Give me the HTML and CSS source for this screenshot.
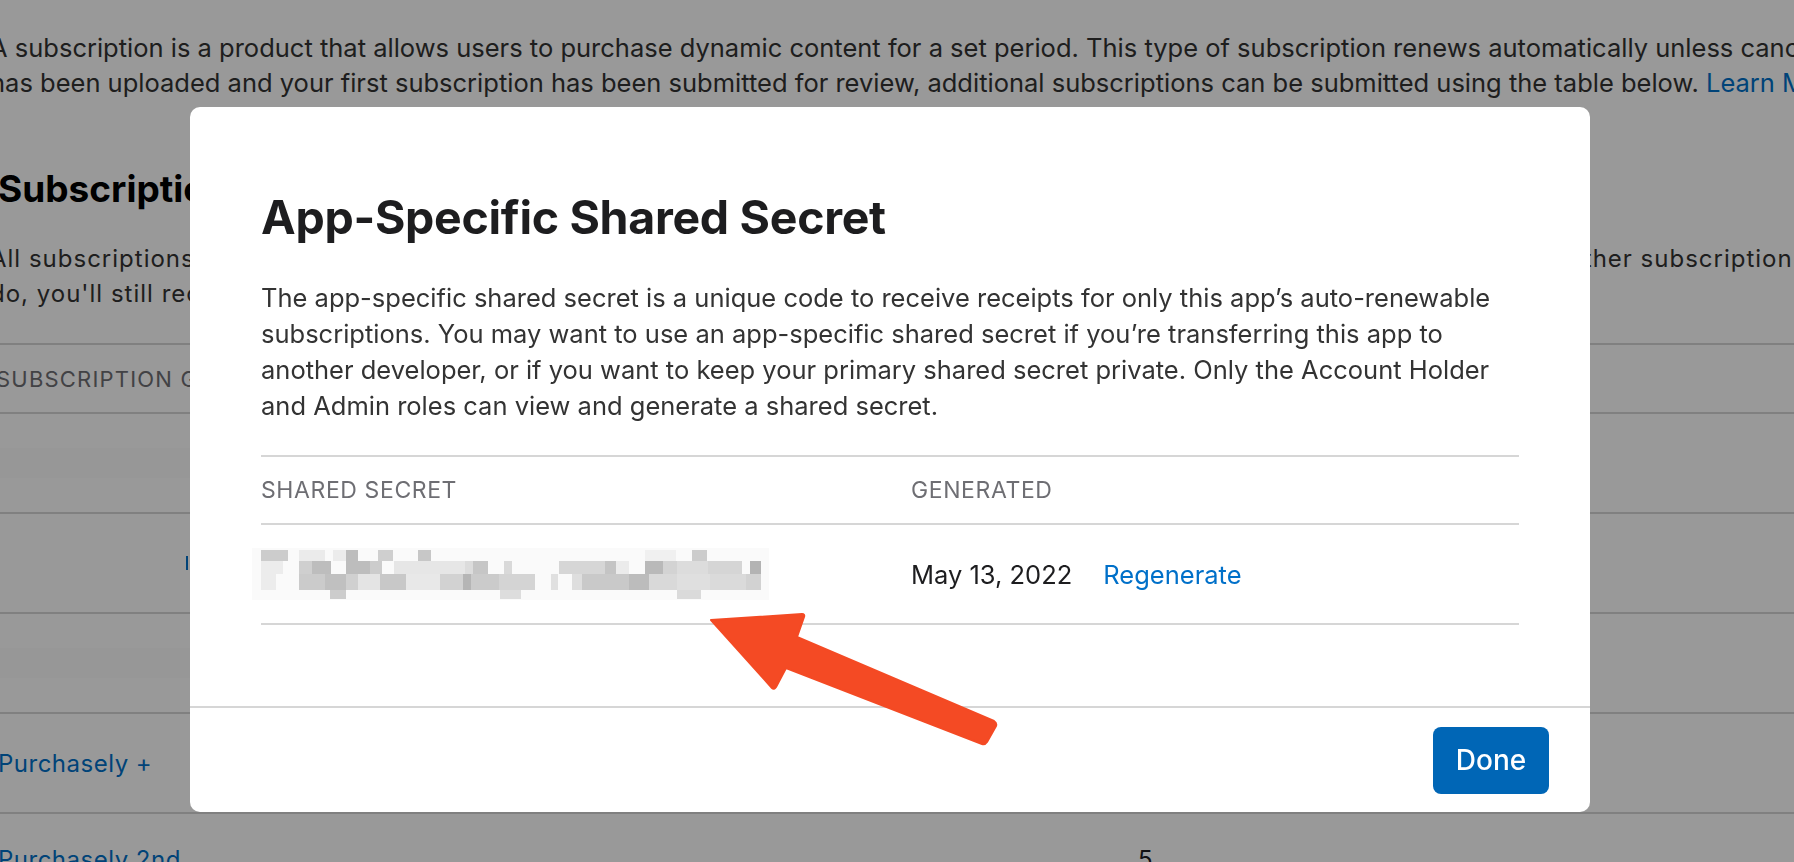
FILE: index.html
```html
<!DOCTYPE html>
<html lang="en">
<head>
<meta charset="utf-8">
<title>App-Specific Shared Secret</title>
<link rel="stylesheet" href="styles.css">
</head>
<body>
<div class="page">
  <p class="intro">A subscription is a product that allows users to purchase dynamic content for a set period. This type of subscription renews automatically unless cancelled by the user.<br>has been uploaded and your first subscription has been submitted for review, additional subscriptions can be submitted using the table below. <a class="bg-link">Learn More</a></p>
  <h2 class="bg-title">Subscription Groups</h2>
  <p class="bg-text">All subscriptions must be part of a group. Users can subscribe to only one subscription per group at any time, and can also buy other subscription groups as well.<br>do, you'll still receive a single notification for each of the subscriptions they have.</p>
  <div class="bg-table">
    <div class="bg-row bg-head"><span class="bg-cell">SUBSCRIPTION GROUP REFERENCE NAME</span></div>
    <div class="bg-row"><span class="bg-cell bg-faint">&nbsp;</span></div>
    <div class="bg-row"><span class="bg-cell bg-blue-frag">&nbsp;</span></div>
    <div class="bg-row"><span class="bg-cell bg-faint">&nbsp;</span></div>
    <div class="bg-row"><a class="bg-cell bg-name">Purchasely +</a></div>
    <div class="bg-row"><a class="bg-cell bg-name">Purchasely 2nd</a><span class="bg-count">5</span></div>
  </div>
</div>

<div class="overlay"></div>

<div class="modal">
  <div class="modal-body">
    <h1 class="modal-title">App-Specific Shared Secret</h1>
    <p class="modal-desc">The app-specific shared secret is a unique code to receive receipts for only this app’s auto-renewable<br>subscriptions. You may want to use an app-specific shared secret if you’re transferring this app to<br>another developer, or if you want to keep your primary shared secret private. Only the Account Holder<br>and Admin roles can view and generate a shared secret.</p>
    <div class="secret-table">
      <div class="st-row st-head">
        <div class="st-col1">SHARED SECRET</div>
        <div class="st-col2">GENERATED</div>
      </div>
      <div class="st-row st-data">
        <div class="st-col1">
          <svg class="pixelated" width="520" height="54" viewBox="0 0 520 54" aria-label="hidden secret">
            <rect x="1" y="1" width="517" height="52" fill="#fafafa"/>
            <g transform="translate(8,1)">
            <rect x="2" y="2" width="27" height="11" fill="#cccccc"/>
            <rect x="40" y="2" width="26" height="11" fill="#ebebeb"/>
            <rect x="74" y="2" width="13" height="11" fill="#ececec"/>
            <rect x="87" y="2" width="12" height="11" fill="#bdbdbd"/>
            <rect x="119" y="2" width="15" height="11" fill="#cfcfcf"/>
            <rect x="159" y="2" width="13" height="11" fill="#c7c7c7"/>
            <rect x="386" y="2" width="31" height="11" fill="#f0f0f0"/>
            <rect x="433" y="2" width="15" height="11" fill="#cccccc"/>

            <rect x="2" y="13" width="22" height="13" fill="#ececec"/>
            <rect x="40" y="13" width="13" height="13" fill="#cfcfcf"/>
            <rect x="53" y="13" width="19" height="13" fill="#bdbdbd"/>
            <rect x="87" y="13" width="24" height="13" fill="#bdbdbd"/>
            <rect x="111" y="13" width="12" height="13" fill="#cccccc"/>
            <rect x="135" y="13" width="71" height="13" fill="#e6e6e6"/>
            <rect x="206" y="13" width="8" height="13" fill="#dcdcdc"/>
            <rect x="214" y="13" width="15" height="13" fill="#c6c6c6"/>
            <rect x="245" y="13" width="8" height="13" fill="#d9d9d9"/>
            <rect x="300" y="13" width="46" height="13" fill="#d6d6d6"/>
            <rect x="346" y="13" width="11" height="13" fill="#c4c4c4"/>
            <rect x="357" y="13" width="13" height="13" fill="#ebebeb"/>
            <rect x="386" y="13" width="18" height="13" fill="#b9b9b9"/>
            <rect x="404" y="13" width="14" height="13" fill="#d3d3d3"/>
            <rect x="418" y="13" width="31" height="13" fill="#dcdcdc"/>
            <rect x="449" y="13" width="34" height="13" fill="#d5d5d5"/>
            <rect x="491" y="13" width="11" height="13" fill="#b3b3b3"/>

            <rect x="2" y="26" width="15" height="16" fill="#ececec"/>
            <rect x="40" y="26" width="26" height="16" fill="#cbcbcb"/>
            <rect x="66" y="26" width="21" height="16" fill="#c0c0c0"/>
            <rect x="87" y="26" width="12" height="16" fill="#d0d0d0"/>
            <rect x="99" y="26" width="22" height="16" fill="#e4e4e4"/>
            <rect x="121" y="26" width="26" height="16" fill="#c8c8c8"/>
            <rect x="147" y="26" width="34" height="16" fill="#e8e8e8"/>
            <rect x="181" y="26" width="23" height="16" fill="#d2d2d2"/>
            <rect x="204" y="26" width="8" height="16" fill="#b5b5b5"/>
            <rect x="212" y="26" width="28" height="16" fill="#cbcbcb"/>
            <rect x="240" y="26" width="36" height="16" fill="#d4d4d4"/>
            <rect x="292" y="26" width="7" height="16" fill="#e0e0e0"/>
            <rect x="313" y="26" width="10" height="16" fill="#dedede"/>
            <rect x="323" y="26" width="47" height="16" fill="#c9c9c9"/>
            <rect x="370" y="26" width="20" height="16" fill="#bcbcbc"/>
            <rect x="390" y="26" width="28" height="16" fill="#d9d9d9"/>
            <rect x="418" y="26" width="33" height="16" fill="#dfdfdf"/>
            <rect x="451" y="26" width="36" height="16" fill="#dadada"/>
            <rect x="487" y="26" width="15" height="16" fill="#d2d2d2"/>

            <rect x="71" y="42" width="16" height="9" fill="#cccccc"/>
            <rect x="241" y="42" width="21" height="9" fill="#dddddd"/>
            <rect x="418" y="42" width="24" height="9" fill="#dadada"/>
            </g>
          </svg>
        </div>
        <div class="st-col2">
          <span class="st-date">May 13, 2022</span>
          <a class="st-link">Regenerate</a>
        </div>
      </div>
    </div>
  </div>
  <div class="modal-footer">
    <button class="btn-done" type="button">Done</button>
  </div>
</div>

<svg class="arrow" width="1794" height="862" viewBox="0 0 1794 862" aria-hidden="true">
  <path d="M711 620 L802 614 Q805 614 804 617 L797 637 L994 721 Q997 723 996 726 L987 742 Q985 745 982 744 L786 668 L776 687 Q774 690 772 688 Z" fill="#f44a24" stroke="#f44a24" stroke-width="2" stroke-linejoin="round"/>
</svg>
</body>
</html>
```

FILE: styles.css
```css
* {
  box-sizing: border-box;
}

html, body {
  margin: 0;
  padding: 0;
  width: 1794px;
  height: 862px;
  overflow: hidden;
  background: #ffffff;
}

body {
  font-family: Inter, "Liberation Sans", sans-serif;
  color: #1d1d1f;
}

/* ---------- background page ---------- */
.page {
  margin-left: -10px;
  padding-top: 30px;
  white-space: nowrap;
}

.intro {
  margin: 0;
  font-size: 25.5px;
  line-height: 35px;
  color: #333333;
}

.bg-link {
  color: #0070c9;
}

.bg-title {
  margin: 67px 0 0 8px;
  font-size: 37px;
  line-height: 44px;
  font-weight: 700;
  color: #000;
}

.bg-text {
  margin: 30px 0 0 0;
  font-size: 24px;
  line-height: 35px;
  color: #333333;
  letter-spacing: 1px;
}

.bg-table {
  margin-top: 32px;
  margin-left: 10px;
  border-top: 2px solid #d6d6d6;
}

.bg-row {
  display: flex;
  align-items: center;
  border-bottom: 2px solid #d6d6d6;
  height: 100px;
  font-size: 24px;
}

.bg-head {
  height: 69px;
}

.bg-head .bg-cell {
  color: #6e6e73;
  font-size: 22px;
  letter-spacing: 1.2px;
  margin-left: -4px;
}

.bg-faint {
  width: 380px;
  height: 30px;
  background: #fcfcfc;
}

.bg-blue-frag {
  margin-left: 186px;
  width: 10px;
  height: 14px;
  border-left: 2px solid #0070c9;
}

.bg-name {
  margin-left: -2px;
  color: #0070c9;
  letter-spacing: 0.5px;
}

.bg-count {
  margin-left: 957px;
  color: #1d1d1f;
}

.bg-row:last-child {
  align-items: flex-end;
  height: 60px;
  border-bottom: none;
}

.overlay {
  position: fixed;
  inset: 0;
  background: rgba(0, 0, 0, 0.4);
}

/* ---------- modal ---------- */
.modal {
  position: fixed;
  left: 190px;
  top: 107px;
  width: 1400px;
  height: 705px;
  background: #ffffff;
  border-radius: 10px;
  display: flex;
  flex-direction: column;
  overflow: hidden;
}

.modal-body {
  flex: 1;
  padding: 84px 71px 0 71px;
}

.modal-title {
  margin: 0;
  font-size: 46.5px;
  line-height: 52px;
  font-weight: 700;
  letter-spacing: -0.3px;
  color: #1d1d1f;
}

.modal-desc {
  margin: 37px 0 0 0;
  font-size: 25.5px;
  line-height: 36px;
  color: #333333;
  white-space: nowrap;
}

.secret-table {
  margin-top: 31px;
  border-top: 2px solid #d6d6d6;
}

.st-row {
  display: flex;
  align-items: center;
  border-bottom: 2px solid #d6d6d6;
}

.st-head {
  height: 68px;
  font-size: 23px;
  color: #6e6e73;
  letter-spacing: 0.6px;
}

.st-data {
  height: 100px;
  font-size: 25.5px;
  color: #1d1d1f;
}

.st-col1 {
  width: 650px;
  flex: none;
  display: flex;
  align-items: center;
}

.st-col2 {
  display: flex;
  align-items: center;
  gap: 31px;
}

.pixelated {
  display: block;
  margin-left: -10px;
}

.st-link {
  color: #0070c9;
}

.modal-footer {
  height: 106px;
  flex: none;
  border-top: 2px solid #d6d6d6;
  display: flex;
  justify-content: flex-end;
  align-items: center;
  padding-right: 41px;
}

.btn-done {
  width: 116px;
  height: 67px;
  border: none;
  border-radius: 8px;
  background: #0066b6;
  color: #ffffff;
  font-family: Inter, "Liberation Sans", sans-serif;
  font-size: 28px;
  font-weight: 500;
}

.arrow {
  position: fixed;
  left: 0;
  top: 0;
  pointer-events: none;
}
```
